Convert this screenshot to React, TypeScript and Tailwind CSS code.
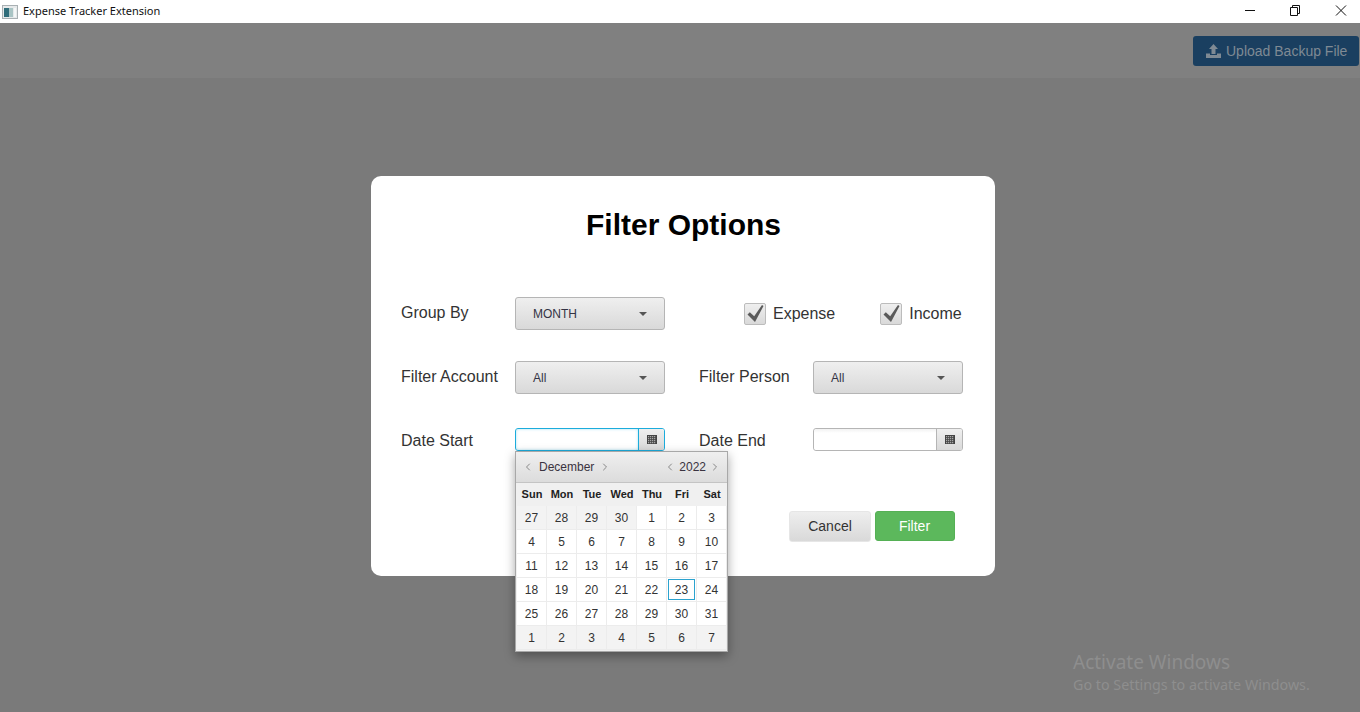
import React from "react";
import { ChevronLeft, ChevronRight } from "lucide-react";

const font = { fontFamily: '"Liberation Sans", Arial, sans-serif' };

function Select({ value }: { value: string }) {
  return (
    <div className="flex h-[33px] w-[150px] items-center justify-between rounded-[3px] border border-[#b5b5b5] bg-gradient-to-b from-[#efefef] to-[#d9d9d9] pl-[17px] pr-[17px] text-[12px] text-[#333344]">
      <span>{value}</span>
      <span className="h-0 w-0 border-x-[4px] border-t-[4px] border-x-transparent border-t-[#555555]" />
    </div>
  );
}

function CalIcon() {
  return (
    <svg width="10" height="9" viewBox="0 0 10 9" className="block">
      <rect width="10" height="9" fill="#444444" />
      {[1, 3, 5, 7].map((y) =>
        [1, 3, 5, 7].map((x) => (
          <rect key={`${x}-${y}`} x={x + 0.2} y={y + 0.2} width="1" height="1" fill="#dddddd" />
        ))
      )}
    </svg>
  );
}

function DateField({ focused }: { focused?: boolean }) {
  return (
    <div
      className={
        focused
          ? "flex h-[23px] w-[150px] rounded-[3px] border-[1.5px] border-[#1cacdc] bg-white"
          : "flex h-[23px] w-[150px] rounded-[3px] border border-[#b5b5b5] bg-white"
      }
    >
      <div
        className={
          focused
            ? "flex-1 rounded-l-[2px] shadow-[inset_0_0_3px_#a8e2f4]"
            : "flex-1 rounded-l-[3px] bg-gradient-to-b from-[#f2f2f2] to-white to-[4px]"
        }
      />
      <div
        className={
          focused
            ? "flex w-[26px] items-center justify-center rounded-r-[2px] border-l-[1.5px] border-[#1cacdc] bg-gradient-to-b from-[#efefef] to-[#d9d9d9] pl-[1px]"
            : "flex w-[26px] items-center justify-center rounded-r-[2px] border-l border-[#b5b5b5] bg-gradient-to-b from-[#efefef] to-[#d9d9d9] pl-[1px]"
        }
      >
        <CalIcon />
      </div>
    </div>
  );
}

function CheckBox({ label, className }: { label: string; className?: string }) {
  return (
    <div className={`flex items-center ${className ?? ""}`}>
      <div className="flex h-[22px] w-[22px] items-center justify-center rounded-[2px] border border-[#bcbcbc] bg-gradient-to-b from-[#efefef] to-[#d9d9d9]">
        <svg width="18" height="18" viewBox="0 0 18 18">
          <path d="M1.5 9.5 L3.8 7.2 L8.2 11.2 L16 0 L17.5 1 L9 17 Z" fill="#5a5a5a" />
        </svg>
      </div>
      <span className="ml-[7px] text-[16px] leading-[20px] text-[#333333]">{label}</span>
    </div>
  );
}

const weeks: number[][] = [
  [27, 28, 29, 30, 1, 2, 3],
  [4, 5, 6, 7, 8, 9, 10],
  [11, 12, 13, 14, 15, 16, 17],
  [18, 19, 20, 21, 22, 23, 24],
  [25, 26, 27, 28, 29, 30, 31],
  [1, 2, 3, 4, 5, 6, 7],
];

function Calendar() {
  return (
    <div className="absolute left-[144px] top-[275px] z-10 w-[213px] border border-[#a8a8a8] bg-[#f0f0f0] text-[12px] text-[#333333] shadow-[0_4px_10px_rgba(0,0,0,0.35)]">
      <div className="flex h-[31px] items-center justify-between border-b border-[#c4c4c4] bg-gradient-to-b from-[#efefef] to-[#dcdcdc] pl-[6px] pr-[6px]">
        <div className="flex items-center">
          <ChevronLeft size={12} className="text-[#888888]" />
          <span className="mx-[5px] text-[#3a3340]">December</span>
          <ChevronRight size={12} className="text-[#888888]" />
        </div>
        <div className="flex items-center">
          <ChevronLeft size={12} className="text-[#888888]" />
          <span className="mx-[3px] text-[#3a3340]">2022</span>
          <ChevronRight size={12} className="text-[#888888]" />
        </div>
      </div>
      <div className="grid h-[23px] grid-cols-[repeat(7,30px)] items-center pl-[1px] text-[11px] font-bold text-[#222222]">
        {["Sun", "Mon", "Tue", "Wed", "Thu", "Fri", "Sat"].map((d) => (
          <div key={d} className="text-center">{d}</div>
        ))}
      </div>
      <div className="pl-[1px] pb-[1px]">
        {weeks.map((week, wi) => (
          <div key={wi} className="grid h-[24px] grid-cols-[repeat(7,30px)]">
            {week.map((d, di) => {
              const muted = (wi === 0 && di < 4) || wi === 5;
              const today = wi === 3 && di === 5;
              return (
                <div
                  key={di}
                  className={`flex items-center justify-center border-b border-r border-[#ececec] ${muted ? "bg-[#f3f3f3]" : "bg-white"}`}
                >
                  {today ? (
                    <span className="flex h-[21px] w-[27px] items-center justify-center border border-[#2ba3cf]">{d}</span>
                  ) : (
                    d
                  )}
                </div>
              );
            })}
          </div>
        ))}
      </div>
    </div>
  );
}

export default function App() {
  return (
    <div className="relative flex h-[712px] w-[1360px] flex-col overflow-hidden bg-[#7a7a7a]" style={font}>
      <div className="flex h-[23px] items-center bg-white pl-[2px]">
        <svg width="16" height="14" viewBox="0 0 16 14" className="mr-[5px]">
          <rect x="0.5" y="0.5" width="15" height="13" fill="#e6e9ea" stroke="#a9b0b3" />
          <rect x="2" y="3" width="5" height="9" fill="#2f6d7a" />
          <rect x="7" y="3" width="4" height="9" fill="#a9c4c4" />
          <rect x="12" y="3" width="2" height="9" fill="#f4f7f7" />
        </svg>
        <span className="text-[11px] text-[#111111]" style={{ fontFamily: '"Noto Sans", sans-serif' }}>Expense Tracker Extension</span>
        <div className="ml-auto flex items-center">
          <svg width="46" height="23" viewBox="0 0 46 23">
            <path d="M23 10.5h10" stroke="#111" />
          </svg>
          <svg width="46" height="23" viewBox="0 0 46 23" fill="none">
            <path d="M22.5 7.5h7v8h-7z M24.5 7.5v-2h7v8h-2" stroke="#111" />
          </svg>
          <svg width="46" height="23" viewBox="0 0 46 23" fill="none">
            <path d="M22 5.5l10 10M32 5.5l-10 10" stroke="#111" />
          </svg>
        </div>
      </div>

      <div className="flex h-[55px] items-start justify-end bg-[#808080] pr-[1px] pt-[13px]">
        <div className="flex h-[30px] w-[166px] items-center rounded-[3px] bg-[#1a3f60] pl-[13px] text-[14px] text-[#7f8a94]">
          <svg width="15" height="14" viewBox="0 0 15 14" className="mr-[5px]">
            <path d="M7.5 0 L12 5 H9.5 V10 H5.5 V5 H3 Z M0 9.5 H4 V11 H11 V9.5 H15 V14 H0 Z" fill="#7f8a94" />
          </svg>
          Upload Backup File
        </div>
      </div>

      <div className="absolute left-[371px] top-[176px] h-[400px] w-[624px] rounded-[10px] bg-white">
        <h1 className="mt-[31px] pl-[1px] text-center text-[30px] font-bold leading-[36px] text-black">Filter Options</h1>

        <div className="mt-[54px] flex h-[33px] items-center pl-[30px] text-[16px] text-[#333333]">
          <span className="w-[114px] pb-[1px]">Group By</span>
          <Select value="MONTH" />
          <CheckBox label="Expense" className="ml-[79px]" />
          <CheckBox label="Income" className="ml-[45px] mt-[1px]" />
        </div>

        <div className="mt-[31px] flex h-[33px] items-center pl-[30px] text-[16px] text-[#333333]">
          <span className="w-[114px] pb-[1px]">Filter Account</span>
          <Select value="All" />
          <span className="ml-[34px] w-[114px] pb-[1px]">Filter Person</span>
          <Select value="All" />
        </div>

        <div className="mt-[34px] flex h-[23px] items-center pl-[30px] text-[16px] text-[#333333]">
          <span className="w-[114px] pt-[2px]">Date Start</span>
          <DateField focused />
          <span className="ml-[34px] w-[114px] pt-[2px]">Date End</span>
          <DateField />
        </div>

        <div className="mt-[60px] flex justify-end pr-[40px]">
          <div className="flex h-[31px] w-[82px] items-center justify-center rounded-[3px] border border-[#e6e6e6] bg-gradient-to-b from-[#eeeeee] to-[#d9d9d9] text-[14px] text-[#333333]">Cancel</div>
          <div className="ml-[4px] flex h-[30px] w-[80px] items-center justify-center rounded-[3px] border border-[#55b055] bg-[#5cb85c] pr-[1px] text-[14px] text-white">Filter</div>
        </div>

        <Calendar />
      </div>

      <div className="absolute left-[1073px] top-[650px] text-[#8e8e8e]" style={{ fontFamily: '"Noto Sans", sans-serif' }}>
        <div className="text-[19px] leading-[24px]">Activate Windows</div>
        <div className="text-[14.3px] leading-[22px]">Go to Settings to activate Windows.</div>
      </div>
    </div>
  );
}
